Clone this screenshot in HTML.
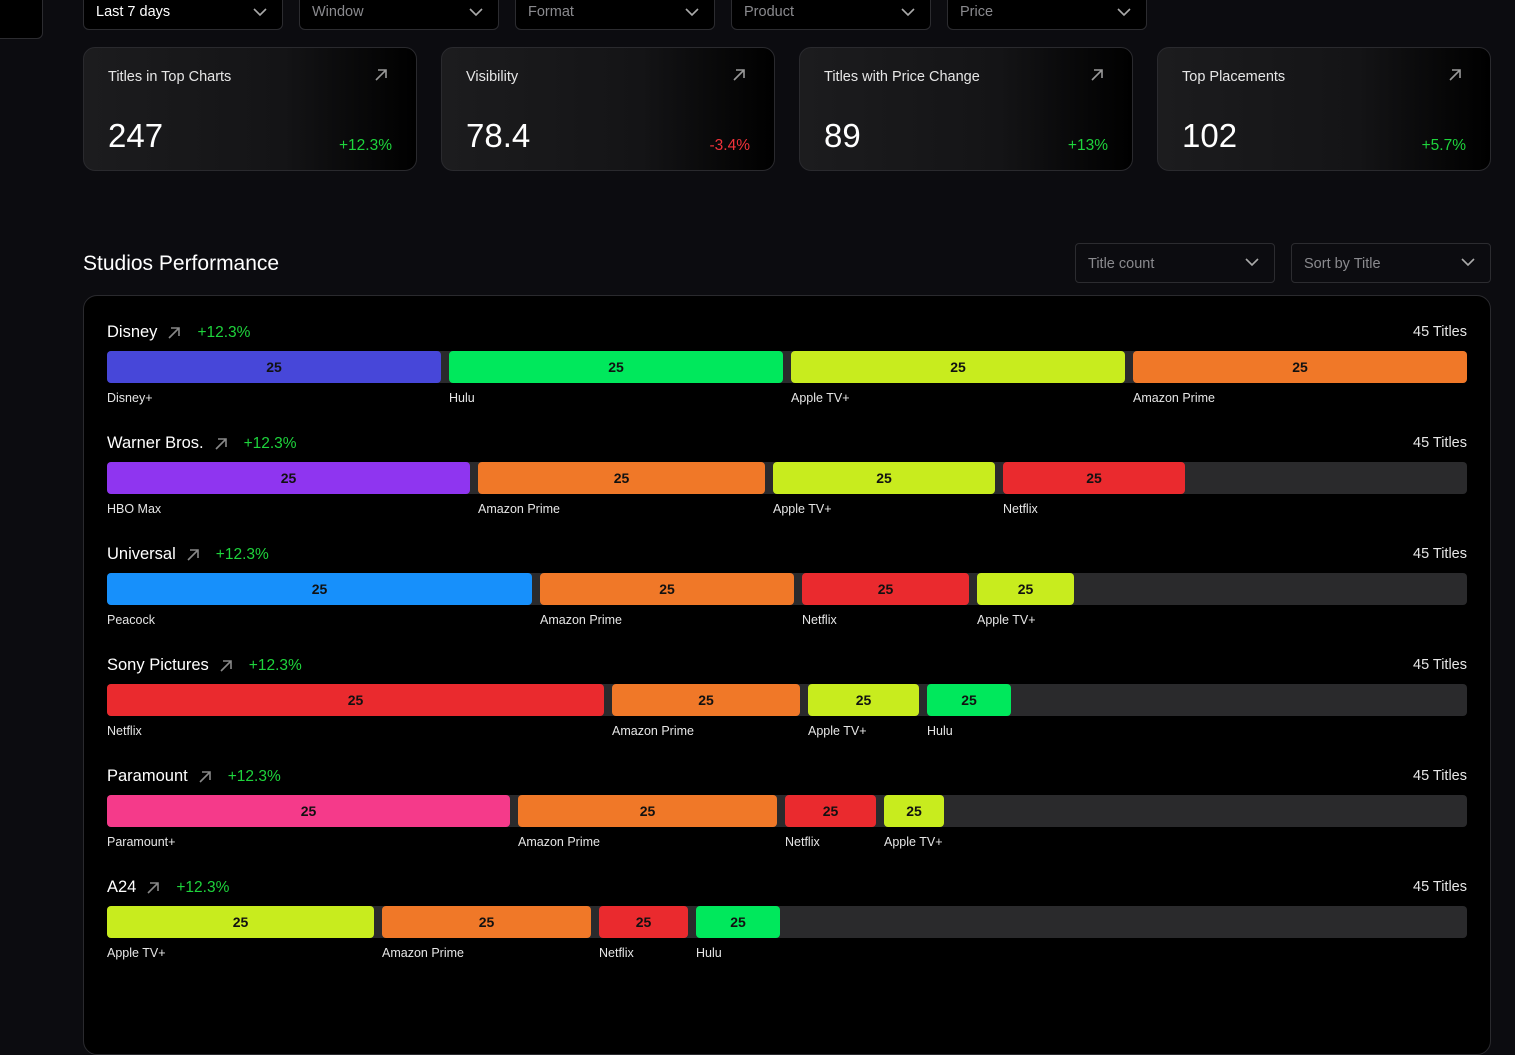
<!DOCTYPE html>
<html><head><meta charset="utf-8"><style>
*{box-sizing:border-box;margin:0;padding:0}
body{width:1515px;height:1004px;overflow:hidden;background:#0c0c10;font-family:"Liberation Sans",sans-serif;color:#fff;position:relative}
.abs{position:absolute}
.sel{position:absolute;top:-10px;height:40px;width:200px;border:1px solid #2c2c30;border-radius:6px;background:#000;font-size:14.5px;color:#8a8a8e;padding:13px 0 0 12px}
.sel.w{color:#fff}
.sel svg,.dd svg{position:absolute;right:14px}
.sel svg{top:16px}
.card{position:absolute;top:47px;width:334px;height:124px;border:1px solid #2a2a2e;border-radius:12px;background:linear-gradient(90deg,#1c1c1e 0%,#141416 60%,#000 100%)}
.card .t{position:absolute;left:24px;top:21px;font-size:14.5px;color:#e6e6e6}
.card .v{position:absolute;left:24px;top:69px;font-size:33px}
.card .p{position:absolute;right:24px;top:89px;font-size:15.5px}
.card svg{position:absolute;right:28px;top:20px}
.g{color:#1ed43c}.r{color:#f0323a}
.dd{position:absolute;top:243px;height:40px;width:200px;border:1px solid #2c2c30;border-radius:4px;background:#0c0c10;font-size:14.5px;color:#8a8a8e;padding:12px 0 0 12px}
.dd svg{top:13px}
.panel{position:absolute;left:83px;top:295px;width:1408px;height:760px;border:1px solid #2a2a2e;border-radius:14px;background:#000}
.row{position:absolute;left:107px;width:1360px}
.row .h{position:absolute;top:2px;font-size:16.5px;display:flex;align-items:center;gap:10px;white-space:nowrap}
.row .h .g{font-size:15.5px;margin-left:6px}
.row .c{position:absolute;right:0;top:3px;font-size:14.5px;color:#e6e6e6}
.track{position:absolute;top:30px;left:0;width:1360px;height:32px;background:#2a2a2c;border-radius:4px}
.seg{position:absolute;top:0;height:32px;border-radius:4px;color:#111;font-size:14px;font-weight:bold;text-align:center;line-height:32px}
.lab{position:absolute;top:70px;font-size:12.5px;color:#e6e6e6}
</style></head><body>
<div class="abs" style="left:-10px;top:-10px;width:53px;height:49px;border:1px solid #2c2c30;border-radius:6px;background:#000"></div>
<div class="sel w" style="left:83px">Last 7 days<svg width="16" height="10" viewBox="0 0 16 10"><path d="M2 2l6 6 6-6" stroke="#aaa" stroke-width="1.6" fill="none"/></svg></div>
<div class="sel" style="left:299px">Window<svg width="16" height="10" viewBox="0 0 16 10"><path d="M2 2l6 6 6-6" stroke="#aaa" stroke-width="1.6" fill="none"/></svg></div>
<div class="sel" style="left:515px">Format<svg width="16" height="10" viewBox="0 0 16 10"><path d="M2 2l6 6 6-6" stroke="#aaa" stroke-width="1.6" fill="none"/></svg></div>
<div class="sel" style="left:731px">Product<svg width="16" height="10" viewBox="0 0 16 10"><path d="M2 2l6 6 6-6" stroke="#aaa" stroke-width="1.6" fill="none"/></svg></div>
<div class="sel" style="left:947px">Price<svg width="16" height="10" viewBox="0 0 16 10"><path d="M2 2l6 6 6-6" stroke="#aaa" stroke-width="1.6" fill="none"/></svg></div>

<div class="card" style="left:83px"><div class="t">Titles in Top Charts</div><svg width="14" height="14" viewBox="0 0 14 14"><path d="M2 12L12 2M4 2h8v8" stroke="#999" stroke-width="1.6" fill="none"/></svg><div class="v">247</div><div class="p g">+12.3%</div></div>
<div class="card" style="left:441px"><div class="t">Visibility</div><svg width="14" height="14" viewBox="0 0 14 14"><path d="M2 12L12 2M4 2h8v8" stroke="#999" stroke-width="1.6" fill="none"/></svg><div class="v">78.4</div><div class="p r">-3.4%</div></div>
<div class="card" style="left:799px"><div class="t">Titles with Price Change</div><svg width="14" height="14" viewBox="0 0 14 14"><path d="M2 12L12 2M4 2h8v8" stroke="#999" stroke-width="1.6" fill="none"/></svg><div class="v">89</div><div class="p g">+13%</div></div>
<div class="card" style="left:1157px"><div class="t">Top Placements</div><svg width="14" height="14" viewBox="0 0 14 14"><path d="M2 12L12 2M4 2h8v8" stroke="#999" stroke-width="1.6" fill="none"/></svg><div class="v">102</div><div class="p g">+5.7%</div></div>

<div class="abs" style="left:83px;top:252px;font-size:21px">Studios Performance</div>
<div class="dd" style="left:1075px">Title count<svg width="16" height="10" viewBox="0 0 16 10"><path d="M2 2l6 6 6-6" stroke="#aaa" stroke-width="1.6" fill="none"/></svg></div>
<div class="dd" style="left:1291px">Sort by Title<svg width="16" height="10" viewBox="0 0 16 10"><path d="M2 2l6 6 6-6" stroke="#aaa" stroke-width="1.6" fill="none"/></svg></div>
<div class="panel"></div>

<div id="rows"></div>
<script>
const A='<svg width="14" height="14" viewBox="0 0 14 14"><path d="M2 12L12 2M4 2h8v8" stroke="#888" stroke-width="1.6" fill="none"/></svg>';
const C={b:'#4747d9',g:'#00e85c',l:'#c8ec1e',o:'#f07828',p:'#8f35f0',r:'#ea2a2e',s:'#1790fb',k:'#f53a8a'};
const rows=[
['Disney',[[107,441,'b','Disney+'],[449,783,'g','Hulu'],[791,1125,'l','Apple TV+'],[1133,1467,'o','Amazon Prime']]],
['Warner Bros.',[[107,470,'p','HBO Max'],[478,765,'o','Amazon Prime'],[773,995,'l','Apple TV+'],[1003,1185,'r','Netflix']]],
['Universal',[[107,532,'s','Peacock'],[540,794,'o','Amazon Prime'],[802,969,'r','Netflix'],[977,1074,'l','Apple TV+']]],
['Sony Pictures',[[107,604,'r','Netflix'],[612,800,'o','Amazon Prime'],[808,919,'l','Apple TV+'],[927,1011,'g','Hulu']]],
['Paramount',[[107,510,'k','Paramount+'],[518,777,'o','Amazon Prime'],[785,876,'r','Netflix'],[884,944,'l','Apple TV+']]],
['A24',[[107,374,'l','Apple TV+'],[382,591,'o','Amazon Prime'],[599,688,'r','Netflix'],[696,780,'g','Hulu']]]];
let h='';
rows.forEach((r,i)=>{const t=321+i*111;
h+=`<div class="row" style="top:${t}px"><div class="h">${r[0]}${A}<span class="g">+12.3%</span></div><div class="c">45 Titles</div><div class="track">`;
r[1].forEach(s=>{h+=`<div class="seg" style="left:${s[0]-107}px;width:${s[1]-s[0]}px;background:${C[s[2]]}">25</div>`});
h+='</div>';
r[1].forEach(s=>{h+=`<div class="lab" style="left:${s[0]-107}px">${s[3]}</div>`});
h+='</div>';});
document.getElementById('rows').innerHTML=h;
</script>
</body></html>
